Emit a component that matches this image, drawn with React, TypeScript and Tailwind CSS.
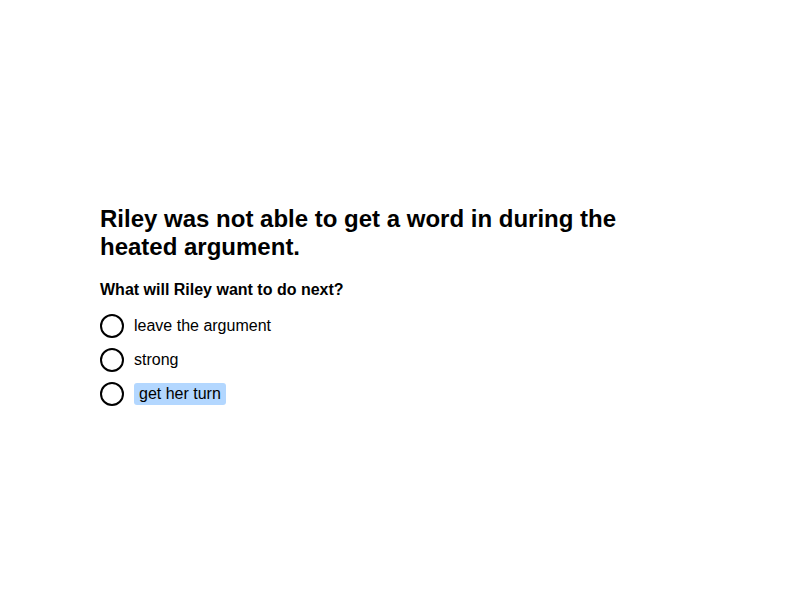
export default function App() {
  const options = ["leave the argument", "strong", "get her turn"];

  return (
    <main className="flex min-h-screen w-full items-center bg-white pl-[100px] pt-[10px] font-['Liberation_Sans',Arial,sans-serif] text-black">
      <div className="w-[560px]">
        <h1 className="text-[24px] font-bold leading-[28px]">
          Riley was not able to get a word in during the heated argument.
        </h1>
        <p className="mt-[19px] text-[16px] font-bold leading-[20px]">
          What will Riley want to do next?
        </p>
        <div className="mt-[14px] flex flex-col gap-[10px]">
          {options.map((option, i) => (
            <div key={option} className="flex h-[24px] items-center gap-[10px]">
              <span className="h-[24px] w-[24px] shrink-0 rounded-full border-2 border-black" />
              <span
                className={
                  i === 2
                    ? "rounded-[3px] bg-[#b3d7ff] px-[5px] text-[16px] leading-[22px]"
                    : "text-[16px] leading-[22px]"
                }
              >
                {option}
              </span>
            </div>
          ))}
        </div>
      </div>
    </main>
  );
}
